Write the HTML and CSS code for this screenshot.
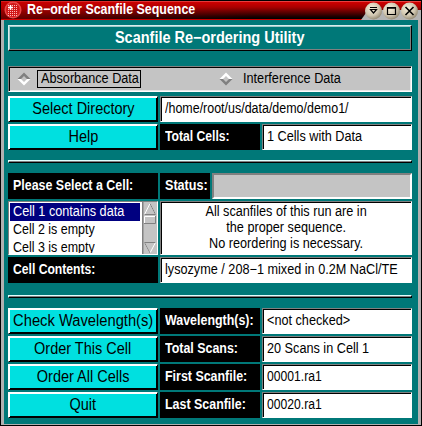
FILE: index.html
```
<!DOCTYPE html>
<html lang="en">
<head>
<meta charset="utf-8">
<title>Re-order Scanfile Sequence</title>
<link rel="stylesheet" href="styles.css">
</head>
<body>
<div class="window">
  <header class="titlebar">
    <svg class="app-icon" width="18" height="18" viewBox="0 0 18 18">
      <circle cx="9" cy="9" r="8.500" fill="#e84848"/>
      <circle cx="9" cy="9" r="7" fill="#d01818"/>
      <path d="M4 4.500h10M4 6.500h10M4 8.500h10M4 10.500h10M4 12.500h10M4 14.500h10" stroke="#ffb8b8" stroke-dasharray="1 1"/>
      <path d="M6.500 4v5M4 6.500h5" stroke="#fff" stroke-width="1.500"/>
    </svg>
    <h1 class="caption"><span class="t">Re−order Scanfile Sequence</span></h1>
    <svg class="controls" width="60" height="19" viewBox="0 0 60 19">
      <defs>
        <radialGradient id="knob" cx=".4" cy=".35" r=".7">
          <stop offset="0" stop-color="#f8f0dc"/><stop offset=".6" stop-color="#d0c6b0"/><stop offset="1" stop-color="#8c826c"/>
        </radialGradient>
      </defs>
      <path d="M0 19L7 9H60V19Z" fill="#b4b4b4"/>
      <circle cx="12.500" cy="10" r="8.500" fill="url(#knob)"/>
      <circle cx="30.500" cy="10" r="8.500" fill="url(#knob)"/>
      <circle cx="48.500" cy="10" r="8.500" fill="url(#knob)"/>
      <path d="M9 6.500h7M9.500 8.500h6l-3 3.500z" fill="none" stroke="#000" stroke-width="1.200"/>
      <path d="M26.500 6.500h8v7h-8zM26.500 7.200h8" fill="none" stroke="#000" stroke-width="1.200"/>
      <path d="M44.500 6l8 8M52.500 6l-8 8" stroke="#000" stroke-width="1.600"/>
    </svg>
  </header>
  <main class="client">
    <div class="banner"><span class="t">Scanfile Re−ordering Utility</span></div>
    <div class="modes">
      <div class="mode selected"><svg width="14" height="14" viewBox="0 0 14 14"><path d="M.5 7L7 .5L13.500 7H10L7 4L4 7Z" fill="#808080"/><path d="M.5 7L7 13.500L13.500 7H10L7 10L4 7Z" fill="#fff"/></svg><div class="mode-label"><span class="t">Absorbance Data</span></div></div>
      <div class="mode"><svg width="14" height="14" viewBox="0 0 14 14"><path d="M.5 7L7 .5L13.500 7H10L7 4L4 7Z" fill="#fff"/><path d="M.5 7L7 13.500L13.500 7H10L7 10L4 7Z" fill="#808080"/></svg><div class="mode-label"><span class="t">Interference Data</span></div></div>
    </div>
    <div class="grid">
      <button class="btn"><span class="t">Select Directory</span></button>
      <div class="field wide"><span class="t t-path">/home/root/us/data/demo/demo1/</span></div>
      <button class="btn"><span class="t">Help</span></button>
      <div class="label"><span class="t t-tight">Total Cells:</span></div>
      <div class="field"><span class="t">1 Cells with Data</span></div>
    </div>
    <hr class="rule">
    <div class="cell-grid">
      <div class="label"><span class="t">Please Select a Cell:</span></div>
      <div class="status-row">
        <div class="label"><span class="t t-status">Status:</span></div>
        <div class="progress"></div>
      </div>
      <div class="listbox">
        <ul class="items">
          <li class="item active"><span class="t">Cell 1 contains data</span></li>
          <li class="item"><span class="t t-path">Cell 2 is empty</span></li>
          <li class="item"><span class="t t-path">Cell 3 is empty</span></li>
        </ul>
        <svg class="scrollbar" width="15" height="52" viewBox="0 0 15 52">
          <path d="M0 0h15v52H0z" fill="#c4c4c4"/>
          <path d="M0 0h1.500v52H0z" fill="#808080"/>
          <path d="M2.500 12.500L8 1.500L13.500 12.500Z" fill="#c4c4c4" stroke="#fff"/><path d="M8 1.500L13.500 12.500H2.500" fill="none" stroke="#808080"/>
          <path d="M2.500 22V14.500H13.500" fill="none" stroke="#fff"/><path d="M2 21.500h11.500V14" fill="none" stroke="#808080"/>
          <path d="M2.500 40.500H13.500L8 51Z" fill="#c4c4c4" stroke="#fff"/><path d="M13.500 40.500H2.500L8 51" fill="none" stroke="#808080"/>
        </svg>
      </div>
      <div class="field message"><span class="t">All scanfiles of this run are in</span><span class="t">the proper sequence.</span><span class="t">No reordering is necessary.</span></div>
      <div class="label"><span class="t t-tight">Cell Contents:</span></div>
      <div class="field"><span class="t">lysozyme / 208−1 mixed in 0.2M NaCl/TE</span></div>
    </div>
    <hr class="rule lower">
    <div class="grid">
      <button class="btn"><span class="t t-check">Check Wavelength(s)</span></button>
      <div class="label"><span class="t">Wavelength(s):</span></div>
      <div class="field"><span class="t">&lt;not checked&gt;</span></div>
      <button class="btn"><span class="t">Order This Cell</span></button>
      <div class="label"><span class="t">Total Scans:</span></div>
      <div class="field"><span class="t">20 Scans in Cell 1</span></div>
      <button class="btn"><span class="t">Order All Cells</span></button>
      <div class="label"><span class="t">First Scanfile:</span></div>
      <div class="field"><span class="t t-tight">00001.ra1</span></div>
      <button class="btn"><span class="t">Quit</span></button>
      <div class="label"><span class="t">Last Scanfile:</span></div>
      <div class="field"><span class="t t-tight">00020.ra1</span></div>
    </div>
  </main>
</div>
</body>
</html>
```

FILE: styles.css
```
* { box-sizing: border-box; }
body { margin: 0; font: 14px/16px "Liberation Sans", Arial, sans-serif; color: #000; }

/* Condensed interface lettering */
.t { display: inline-block; white-space: pre; transform: scaleX(.905); transform-origin: left center; vertical-align: top; }
.label .t, .caption .t { transform: scaleX(.888); }
.banner .t, .btn .t, .message .t { transform-origin: center; }
.t.t-path { transform: scaleX(.89); }
.t.t-tight { transform: scaleX(.868); }
.t.t-status { transform: scaleX(.9); }
.t.t-check { transform: scaleX(.92); }

.window { width: 422px; height: 426px; overflow: hidden; background: #b0b0b0; border: 1px solid #000; display: flex; flex-direction: column; }
.titlebar { height: 19px; flex: none; display: flex; align-items: center; padding-left: 3px; background: linear-gradient(90deg, rgba(190, 0, 0, .55), rgba(190, 0, 0, 0) 60%), linear-gradient(#e84040 1px, #d00000 1px, #a80000 35%, #200000 85%, #000); border-bottom: 1px solid #d00000; }
.app-icon { flex: none; }
.caption { margin: 0 auto 2px 5px; width: 300px; font-size: 14px; line-height: 16px; color: #fff; white-space: pre; }
.controls { flex: none; }
.client { flex: 1; margin: 0 3px 1px; padding: 5px 5px 0 4px; background: #007878; display: flex; flex-direction: column; }
.banner { width: 404px; height: 26px; flex: none; border: 1px solid; border-color: #d8eeee #000 #000 #d8eeee; box-shadow: inset -1px -1px #808080, inset 1px 1px #a0c8c8; color: #fff; font-weight: bold; font-size: 16px; display: flex; align-items: center; justify-content: center; }
.modes { width: 404px; height: 26px; flex: none; margin: 15px 0 4px; padding-left: 8px; background: #c4c4c4; border: 1px solid; border-color: #808080 #fff #fff #808080; box-shadow: inset 1px 1px #000, inset -1px -1px #e8e8e8; display: grid; grid-template-columns: 202px 1fr; align-items: center; }
.mode { display: flex; align-items: center; gap: 6px; }
.mode svg { flex: none; }
.mode-label { border: 1px solid transparent; padding: 0 3px; height: 18px; line-height: 14px; }
.selected .mode-label { border-color: #000; width: 104px; }
.grid { display: grid; grid-template-columns: 150px 100px 150px; grid-auto-rows: 26px; gap: 2px; flex: none; }
.wide { grid-column: 2 / 4; }
.btn { min-width: 0; font: 16px/20px "Liberation Sans", Arial, sans-serif; padding: 0; background: #00e0e0; color: #000; border: 1px solid; border-color: #fff #000 #000 #fff; box-shadow: inset 1px 1px #fff, inset -1px -1px #000; display: flex; align-items: center; justify-content: center; }
.label { background: #000; color: #fff; font-weight: bold; padding: 4px 0 0 5px; }
.field { background: #fff; border: 1px solid; border-color: #808080 #fff #fff #808080; box-shadow: inset 1px 1px #000; padding: 3px 0 0 4px; }
.rule { width: 404px; height: 3px; flex: none; margin: 10px 0; border: 1px solid; border-color: #e0ffff #000 #000 #e0ffff; background: #808080; }
.lower { margin-top: 12px; }
.cell-grid { display: grid; grid-template-columns: 150px 252px; grid-template-rows: 26px 54px 26px; gap: 2px; flex: none; }
.status-row { display: grid; grid-template-columns: 50px 200px; gap: 2px; }
.progress { width: 200px; background: #c4c4c4; border: 2px solid; border-color: #808080 #fff #fff #808080; }
.listbox { background: #fff; border: 1px solid; border-color: #808080 #fff #fff #808080; padding: 0 0 0 1px; display: flex; overflow: hidden; }
.items { flex: 1; margin: 1px 0; padding: 0; list-style: none; height: 50px; overflow: hidden; }
.item { height: 18px; line-height: 16px; padding-left: 3px; }
.active { background: #000080; color: #fff; margin-right: 2px; }
.scrollbar { flex: none; }
.message { display: flex; flex-direction: column; align-items: center; padding: 1px 0 0; }
```
